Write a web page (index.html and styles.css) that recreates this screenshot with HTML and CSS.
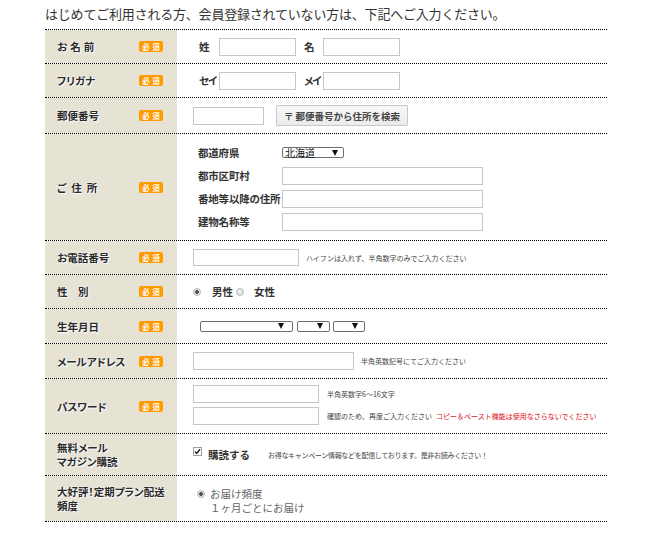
FILE: index.html
```html
<!DOCTYPE html>
<html lang="ja">
<head>
<meta charset="utf-8">
<title>会員登録</title>
<link rel="stylesheet" href="styles.css">
</head>
<body>
<div class="page">
  <h1 class="title">はじめてご利用される方、会員登録されていない方は、下記へご入力ください。</h1>
  <div class="form">

    <div class="row row-34">
      <div class="th"><span class="th-label sp-3">お名前</span><span class="req">必須</span></div>
      <div class="td td-name">
        <span class="flabel">姓</span><input class="input in-name" type="text">
        <span class="flabel flabel-2">名</span><input class="input in-name" type="text">
      </div>
    </div>

    <div class="row row-34">
      <div class="th"><span class="th-label">フリガナ</span><span class="req">必須</span></div>
      <div class="td td-name">
        <span class="flabel">セイ</span><input class="input in-name" type="text">
        <span class="flabel flabel-2">メイ</span><input class="input in-name" type="text">
      </div>
    </div>

    <div class="row row-36">
      <div class="th"><span class="th-label">郵便番号</span><span class="req">必須</span></div>
      <div class="td td-16">
        <input class="input in-zip" type="text">
        <button class="zip-btn" type="button">〒 郵便番号から住所を検索</button>
      </div>
    </div>

    <div class="row row-107">
      <div class="th"><span class="th-label sp-5">ご住所</span><span class="req">必須</span></div>
      <div class="td td-addr">
        <div class="addr">
          <span class="alabel">都道府県</span>
          <div class="sel sel-pref"><span class="sel-text">北海道</span><span class="sel-arrow"></span></div>
          <span class="alabel">都市区町村</span>
          <input class="input in-addr" type="text">
          <span class="alabel">番地等以降の住所</span>
          <input class="input in-addr" type="text">
          <span class="alabel">建物名称等</span>
          <input class="input in-addr" type="text">
        </div>
      </div>
    </div>

    <div class="row row-34">
      <div class="th"><span class="th-label">お電話番号</span><span class="req">必須</span></div>
      <div class="td td-16">
        <input class="input in-tel" type="text">
        <span class="note note-tel">ハイフンは入れず、半角数字のみでご入力ください</span>
      </div>
    </div>

    <div class="row row-34">
      <div class="th"><span class="th-label">性　別</span><span class="req">必須</span></div>
      <div class="td td-16">
        <span class="radio on"></span><span class="opt opt-m">男性</span>
        <span class="radio radio-2"></span><span class="opt opt-f">女性</span>
      </div>
    </div>

    <div class="row row-35">
      <div class="th"><span class="th-label">生年月日</span><span class="req">必須</span></div>
      <div class="td td-birth">
        <div class="sel sel-year"><span class="sel-text"></span><span class="sel-arrow"></span></div>
        <div class="sel sel-month"><span class="sel-text"></span><span class="sel-arrow"></span></div>
        <div class="sel sel-day"><span class="sel-text"></span><span class="sel-arrow"></span></div>
      </div>
    </div>

    <div class="row row-35">
      <div class="th"><span class="th-label">メールアドレス</span><span class="req">必須</span></div>
      <div class="td td-16">
        <input class="input in-mail" type="text">
        <span class="note note-mail">半角英数記号にてご入力ください</span>
      </div>
    </div>

    <div class="row row-55">
      <div class="th"><span class="th-label">パスワード</span><span class="req">必須</span></div>
      <div class="td td-16 td-pass">
        <div class="pass-line">
          <input class="input in-pass" type="password">
          <span class="note note-pass">半角英数字6〜16文字</span>
        </div>
        <div class="pass-line">
          <input class="input in-pass" type="password">
          <span class="note note-pass">確認のため、再度ご入力ください</span><span class="note note-red">コピー＆ペースト機能は使用なさらないでください</span>
        </div>
      </div>
    </div>

    <div class="row row-42">
      <div class="th"><span class="th-label th-two">無料メール<br>マガジン購読</span></div>
      <div class="td td-16">
        <svg class="check" width="9" height="9" viewBox="0 0 9 9" aria-hidden="true">
          <rect x="0.5" y="0.5" width="8" height="8" fill="#fdfdfd" stroke="#a0a0a0"/>
          <path d="M2 4.6 L3.7 6.4 L7 2.2" fill="none" stroke="#222" stroke-width="1.4"/>
        </svg>
        <span class="opt opt-sub">購読する</span>
        <span class="note note-mag">お得なキャンペーン情報などを配信しております。是非お読みください！</span>
      </div>
    </div>

    <div class="row row-46">
      <div class="th"><span class="th-label th-two">大好評！定期プラン配送<br>頻度</span></div>
      <div class="td td-plan">
        <span class="radio on radio-plan"></span>
        <div class="plan-text">
          <div>お届け頻度</div>
          <div>１ヶ月ごとにお届け</div>
        </div>
      </div>
    </div>

  </div>
</div>
</body>
</html>
```

FILE: styles.css
```css
* { box-sizing: border-box; }

body {
  margin: 0;
  background: #fff;
  font-family: "Noto Sans CJK JP", "Noto Sans", sans-serif;
  color: #333;
}

.page {
  padding: 4px 0 0 45px;
}

.title {
  margin: 0 0 5px;
  height: 20px;
  font-size: 13px;
  line-height: 20px;
  font-weight: normal;
  letter-spacing: -0.2px;
  color: #333;
  white-space: nowrap;
}

.form {
  width: 562px;
  border-top: 1px dotted #000;
}

.row {
  display: flex;
  border-bottom: 1px dotted #000;
}

.row-34 { height: 34px; }
.row-35 { height: 35px; }
.row-36 { height: 36px; }
.row-42 { height: 42px; }
.row-46 { height: 46px; }
.row-55 { height: 55px; }
.row-107 { height: 107px; }

.th {
  flex: none;
  width: 132px;
  background: #e6e3d5;
  display: flex;
  align-items: center;
  justify-content: space-between;
  padding: 0 14px 0 12px;
  font-size: 10.5px;
  line-height: 13px;
  font-weight: bold;
  color: #2a2a2a;
  text-shadow: 0 0 2px #fff, 1px 1px 1px #fff;
  white-space: nowrap;
}

.th-label {
  font-feature-settings: "palt";
}
.th-two {
  line-height: 13.5px;
}
.sp-3 { letter-spacing: 3px; }
.sp-5 { letter-spacing: 5px; }

.req {
  flex: none;
  width: 24px;
  height: 11px;
  border-radius: 2px;
  background: #ff9a00;
  color: #fff;
  font-size: 7.5px;
  line-height: 11px;
  font-weight: bold;
  letter-spacing: 2.5px;
  text-indent: 2.5px;
  text-align: center;
  text-shadow: none;
}

.td {
  flex: 1;
  display: flex;
  align-items: center;
  font-size: 10.5px;
  color: #333;
}

.td-16 { padding-left: 16px; }
.td-name { padding-left: 22px; }
.td-addr { padding-left: 21px; }
.td-birth { padding-left: 23px; }

.input {
  flex: none;
  height: 18px;
  margin: 0;
  padding: 0 3px;
  border: 1px solid #c6c6c6;
  background: #fff;
  font: inherit;
}

.in-name { width: 77px; }
.in-zip { width: 71px; }
.in-addr { width: 201px; }
.in-tel { width: 106px; height: 17px; }
.in-mail { width: 161px; }
.in-pass { width: 126px; }

.flabel {
  flex: none;
  width: 20px;
  font-weight: bold;
  font-feature-settings: "palt";
  letter-spacing: -1px;
  white-space: nowrap;
}
.flabel-2 {
  width: 19px;
  margin-left: 8px;
}

.zip-btn {
  flex: none;
  width: 132px;
  height: 21px;
  margin: 0 0 0 12px;
  padding: 0;
  border: 1px solid #c8c8c8;
  border-radius: 1px;
  background: linear-gradient(#f7f7f7, #ebebeb);
  font-family: inherit;
  font-size: 9.5px;
  font-weight: bold;
  color: #444;
  white-space: nowrap;
}

.addr {
  display: grid;
  grid-template-columns: 84px 201px;
  grid-auto-rows: 23px;
  align-items: center;
}

.alabel {
  font-weight: bold;
  white-space: nowrap;
  letter-spacing: -0.2px;
}

.sel {
  flex: none;
  height: 11px;
  border: 1px solid #6e6e6e;
  border-radius: 2px;
  background: #fff;
  display: flex;
  align-items: center;
  justify-content: space-between;
  padding: 0 6px 0 2px;
}

.sel-text {
  font-size: 10px;
  line-height: 9px;
  color: #111;
  white-space: nowrap;
}

.sel-arrow {
  width: 0;
  height: 0;
  border-left: 3.5px solid transparent;
  border-right: 3.5px solid transparent;
  border-top: 6px solid #111;
}

.sel-pref { width: 62px; padding-right: 5px; }
.sel-year { width: 93px; padding-right: 8px; }
.sel-month { width: 33px; margin-left: 4px; }
.sel-day { width: 32px; margin-left: 3px; }

.note {
  font-size: 7px;
  line-height: 10px;
  color: #444;
  white-space: nowrap;
}
.note-tel { margin-left: 7px; }
.note-mail { margin-left: 7px; }
.note-pass { margin-left: 8px; }
.note-red { color: #e0101a; margin-left: 4px; }
.note-mag { letter-spacing: -0.3px; }

.td-pass {
  flex-direction: column;
  align-items: flex-start;
  justify-content: flex-start;
  padding-top: 6px;
  gap: 4px;
}
.pass-line {
  display: flex;
  align-items: center;
}

.radio {
  flex: none;
  width: 8px;
  height: 8px;
  border-radius: 50%;
  border: 1px solid #b8b8b8;
  background: radial-gradient(circle at 45% 40%, #f4f4f4, #d6d6d6);
}
.radio.on {
  background: radial-gradient(circle, #555 0 1.6px, #e6e6e6 2.2px);
}
.radio-2 { margin-left: 3px; }

.opt {
  font-weight: bold;
  white-space: nowrap;
}
.opt-m { margin-left: 11px; }
.opt-f { margin-left: 10px; }

.check {
  flex: none;
  display: block;
  margin-top: -6px;
}
.opt-sub {
  width: 60px;
  margin-left: 6px;
  font-size: 10.5px;
}

.td-plan {
  align-items: flex-start;
  padding: 11px 0 0 20px;
}
.radio-plan { margin-top: 3px; }
.plan-text {
  margin-left: 5px;
  color: #666;
  font-size: 10.5px;
  line-height: 14px;
}
```
